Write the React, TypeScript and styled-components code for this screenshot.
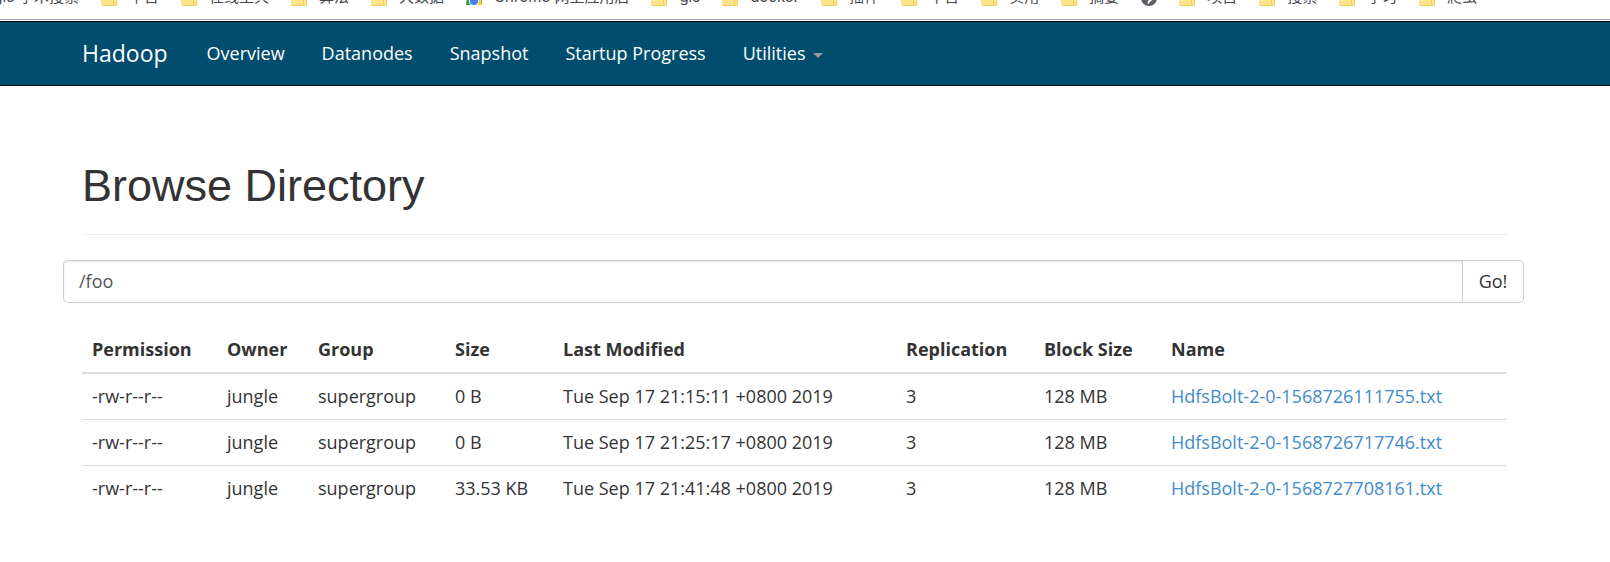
import React from "react";
import styled, { createGlobalStyle } from "styled-components";

const uiFont = `"Segoe UI", "Open Sans", "Noto Sans CJK SC", sans-serif`;

const GlobalStyle = createGlobalStyle`
  *, *::before, *::after { box-sizing: border-box; }
  body {
    margin: 0;
    background: #fff;
    color: #333;
    font-family: ${uiFont};
    font-size: 18px;
    line-height: 25px;
  }
`;

const BookmarkBar = styled.div`
  display: flex;
  align-items: flex-end;
  gap: 22px;
  height: 20px;
  padding-bottom: 13px;
  overflow: hidden;
  border-bottom: 1px solid #a9a5ae;
  font-family: Inter, "Noto Sans CJK SC", sans-serif;
  font-size: 15px;
  line-height: 18px;
  color: #45474b;
`;

const Bookmark = styled.a<{ $clipped?: boolean }>`
  display: flex;
  flex: none;
  align-items: flex-end;
  justify-content: flex-end;
  gap: 12px;
  width: ${(p) => (p.$clipped ? "79px" : "auto")};
  color: inherit;
  text-decoration: none;
  white-space: nowrap;
`;

const BookmarkIcon = styled.svg`
  display: block;
  flex: none;
  width: 16px;
  height: 16px;
`;

const Navbar = styled.nav`
  display: flex;
  align-items: center;
  margin-top: 1px;
  height: 65px;
  padding: 0 63px;
  background: #004d6e;
  border-top: 1px solid #080808;
  border-bottom: 1px solid #080808;
`;

const Brand = styled.a`
  padding: 0 20px 0 19px;
  font-size: 23px;
  color: #fff;
  text-decoration: none;
`;

const NavList = styled.ul`
  display: flex;
  margin: 0;
  padding: 0;
  list-style: none;
`;

const NavLink = styled.a`
  display: flex;
  align-items: center;
  gap: 8px;
  padding: 0 18px 0 19px;
  color: #fff;
  text-decoration: none;
  white-space: nowrap;
`;

const Caret = styled.span`
  margin-top: 4px;
  border-top: 5px solid #999;
  border-left: 5px solid transparent;
  border-right: 5px solid transparent;
`;

const Container = styled.main`
  padding: 75px 103px 0 82px;
`;

const PageHeader = styled.header`
  padding-bottom: 23px;
  border-bottom: 1px solid #eee;
`;

const Title = styled.h1`
  margin: 0;
  font-family: "Liberation Sans", Arial, sans-serif;
  font-size: 45px;
  font-weight: 400;
  line-height: 50px;
`;

const PathForm = styled.form`
  display: flex;
  height: 43px;
  margin: 25px -17px 24px -19px;
`;

const PathInput = styled.input`
  flex: 1;
  min-width: 0;
  padding: 0 15px;
  border: 1px solid #ccc;
  border-right: 0;
  border-radius: 5px 0 0 5px;
  box-shadow: inset 0 1px 2px rgba(0, 0, 0, 0.1);
  background: #fff;
  color: #555;
  font: inherit;
`;

const GoButton = styled.button`
  width: 62px;
  padding: 0;
  border: 1px solid #ccc;
  border-radius: 0 5px 5px 0;
  background: #fff;
  color: #333;
  font: inherit;
`;

const FileTable = styled.table`
  width: 100%;
  table-layout: fixed;
  border-collapse: collapse;
`;

const Column = styled.col<{ $width?: number }>`
  width: ${(p) => (p.$width ? `${p.$width}px` : "auto")};
`;

const HeadCell = styled.th`
  padding: 10px;
  border-bottom: 2px solid #ddd;
  text-align: left;
  font-weight: 700;
  white-space: nowrap;
`;

const Cell = styled.td`
  padding: 10px;
  border-top: 1px solid #ddd;
  white-space: nowrap;
`;

const FileLink = styled.a`
  color: #428bca;
  text-decoration: none;
`;

type IconKind = "folder" | "store" | "globe";

const bookmarks: { label?: string; icon?: IconKind }[] = [
  { label: "gle 学术搜索" },
  { label: "平台", icon: "folder" },
  { label: "在线工具", icon: "folder" },
  { label: "算法", icon: "folder" },
  { label: "大数据", icon: "folder" },
  { label: "Chrome 网上应用店", icon: "store" },
  { label: "gis", icon: "folder" },
  { label: "docker", icon: "folder" },
  { label: "插件", icon: "folder" },
  { label: "平台", icon: "folder" },
  { label: "实用", icon: "folder" },
  { label: "摘要", icon: "folder" },
  { icon: "globe" },
  { label: "项目", icon: "folder" },
  { label: "搜索", icon: "folder" },
  { label: "学习", icon: "folder" },
  { label: "爬虫", icon: "folder" },
];

const columns: { title: string; width?: number }[] = [
  { title: "Permission", width: 135 },
  { title: "Owner", width: 91 },
  { title: "Group", width: 137 },
  { title: "Size", width: 108 },
  { title: "Last Modified", width: 343 },
  { title: "Replication", width: 138 },
  { title: "Block Size", width: 127 },
  { title: "Name" },
];

const files = [
  { size: "0 B", modified: "Tue Sep 17 21:15:11 +0800 2019", name: "HdfsBolt-2-0-1568726111755.txt" },
  { size: "0 B", modified: "Tue Sep 17 21:25:17 +0800 2019", name: "HdfsBolt-2-0-1568726717746.txt" },
  { size: "33.53 KB", modified: "Tue Sep 17 21:41:48 +0800 2019", name: "HdfsBolt-2-0-1568727708161.txt" },
];

const navItems = ["Overview", "Datanodes", "Snapshot", "Startup Progress"];

function Icon({ kind }: { kind: IconKind }) {
  if (kind === "folder") {
    return (
      <BookmarkIcon viewBox="0 0 16 16" aria-hidden="true">
        <path d="M0 1h7l2 2h7v12l-1 1H1l-1-1z" fill="#ffe38a" />
        <path d="M12.5 10v4M1 15.5h14M15.5 10v5" stroke="#f3cf55" fill="none" />
      </BookmarkIcon>
    );
  }
  if (kind === "store") {
    return (
      <BookmarkIcon viewBox="0 0 16 16" aria-hidden="true">
        <path d="M1 4h14l1 11H0z" fill="#2ba24c" />
        <path d="M1 4h14v6H8l-3 4z" fill="#e33b2e" />
        <path d="M10 10h5l1 5h-6z" fill="#fcc934" />
        <circle cx="8" cy="11" r="5" fill="#fff" />
        <circle cx="8" cy="11" r="4" fill="#3f83e8" />
      </BookmarkIcon>
    );
  }
  return (
    <BookmarkIcon viewBox="0 0 16 16" aria-hidden="true">
      <circle cx="8" cy="8" r="8" fill="#5c5f63" />
      <path d="M6 5h8c0 4-2 5-4 6s-2 3-3 3c-1-2 0-3 1-4z" fill="#fff" />
    </BookmarkIcon>
  );
}

export default function App() {
  return (
    <>
      <GlobalStyle />
      <BookmarkBar>
        {bookmarks.map((b, i) => (
          <Bookmark key={i} href="#" $clipped={!b.icon} aria-label={b.label ?? "Website"}>
            {b.icon && <Icon kind={b.icon} />}
            {b.label && <span>{b.label}</span>}
          </Bookmark>
        ))}
      </BookmarkBar>
      <Navbar>
        <Brand href="#">Hadoop</Brand>
        <NavList>
          {navItems.map((item) => (
            <li key={item}>
              <NavLink href="#">{item}</NavLink>
            </li>
          ))}
          <li>
            <NavLink href="#">
              Utilities
              <Caret />
            </NavLink>
          </li>
        </NavList>
      </Navbar>
      <Container>
        <PageHeader>
          <Title>Browse Directory</Title>
        </PageHeader>
        <PathForm onSubmit={(e) => e.preventDefault()}>
          <PathInput type="text" aria-label="Directory path" defaultValue="/foo" />
          <GoButton type="submit">Go!</GoButton>
        </PathForm>
        <FileTable>
          <colgroup>
            {columns.map((c) => (
              <Column key={c.title} $width={c.width} />
            ))}
          </colgroup>
          <thead>
            <tr>
              {columns.map((c) => (
                <HeadCell key={c.title} scope="col">{c.title}</HeadCell>
              ))}
            </tr>
          </thead>
          <tbody>
            {files.map((f) => (
              <tr key={f.name}>
                <Cell>-rw-r--r--</Cell>
                <Cell>jungle</Cell>
                <Cell>supergroup</Cell>
                <Cell>{f.size}</Cell>
                <Cell>{f.modified}</Cell>
                <Cell>3</Cell>
                <Cell>128 MB</Cell>
                <Cell>
                  <FileLink href="#">{f.name}</FileLink>
                </Cell>
              </tr>
            ))}
          </tbody>
        </FileTable>
      </Container>
    </>
  );
}
